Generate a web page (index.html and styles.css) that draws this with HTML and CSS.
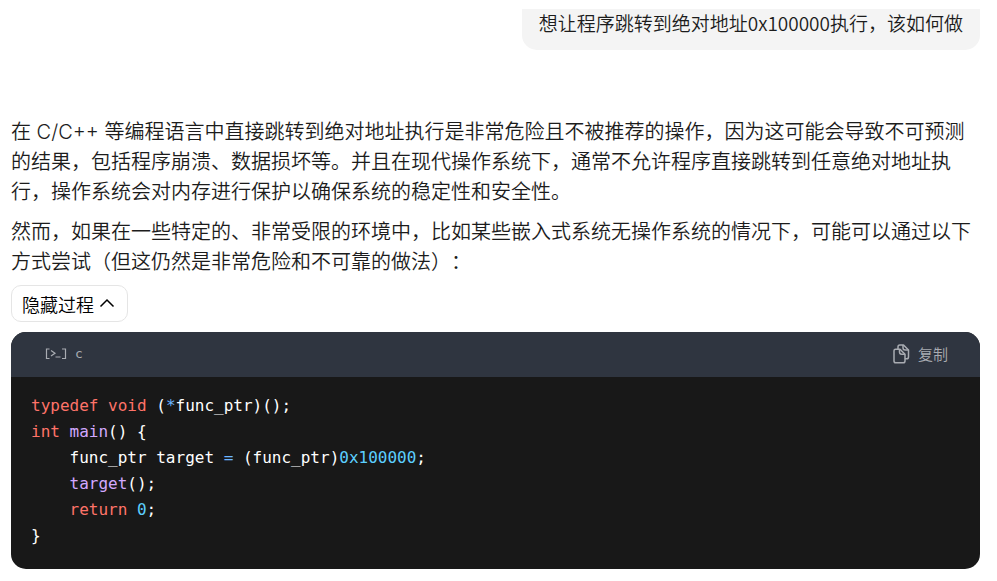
FILE: index.html
```html
<!DOCTYPE html>
<html lang="zh-CN">
<head>
    <meta charset="UTF-8">
    <meta name="viewport" content="width=device-width, initial-scale=1.0">
    <title>对话</title>
    <link rel="stylesheet" href="styles.css">
</head>
<body>
    <main class="chat">
        <div class="question">想让程序跳转到绝对地址0x100000执行，该如何做</div>
        <div class="answer">
            <p>在 C/C++ 等编程语言中直接跳转到绝对地址执行是非常危险且不被推荐的操作，因为这可能会导致不可预测的结果，包括程序崩溃、数据损坏等。并且在现代操作系统下，通常不允许程序直接跳转到任意绝对地址执行，操作系统会对内存进行保护以确保系统的稳定性和安全性。</p>
            <p>然而，如果在一些特定的、非常受限的环境中，比如某些嵌入式系统无操作系统的情况下，可能可以通过以下方式尝试（但这仍然是非常危险和不可靠的做法）：</p>
            <button type="button" class="toggle">
                隐藏过程
                <svg width="16" height="16" viewBox="0 0 16 16" fill="none" stroke="currentColor" stroke-width="1.5" aria-hidden="true">
                    <path d="M1.5 10.5 L8 4 L14.5 10.5"/>
                </svg>
            </button>
            <div class="code">
                <div class="code-header">
                    <span class="lang">
                        <svg width="22" height="12" viewBox="0 0 22 12" fill="none" stroke="currentColor" stroke-width="1.2" aria-hidden="true">
                            <path d="M4.5 1 H1.5 V10.5 H4.5"/>
                            <path d="M6 2.5 L10 5.2 L6 8"/>
                            <path d="M10.5 9 H15.5"/>
                            <path d="M17 1 H20.5 V10.5 H17"/>
                        </svg>
                        c
                    </span>
                    <button type="button" class="copy">
                        <svg width="17" height="20" viewBox="0 0 17 20" fill="none" stroke="currentColor" stroke-width="1.5" stroke-linejoin="round" aria-hidden="true">
                            <path d="M5 5 V2.8 Q5 1 6.8 1 H10.5 L15.5 6 V13 Q15.5 14.8 13.7 14.8 H12"/>
                            <path d="M10 1 V3.7 Q10 6 12.3 6 H15.5"/>
                            <path d="M2.6 5.2 H7 L12 10.2 V17 Q12 18.8 10.2 18.8 H2.8 Q1 18.8 1 17 V6.8 Q1 5.2 2.6 5.2 Z"/>
                            <path d="M6.5 5.2 V8 Q6.5 10.2 8.7 10.2 H12"/>
                        </svg>
                        复制
                    </button>
                </div>
<pre><code><span class="line"><span class="keyword">typedef</span> <span class="keyword">void</span> (<span class="operator">*</span>func_ptr)();</span><span class="line"><span class="keyword">int</span> <span class="function">main</span>() {</span><span class="line">    func_ptr target <span class="operator">=</span> (func_ptr)<span class="number">0x100000</span>;</span><span class="line">    <span class="function">target</span>();</span><span class="line">    <span class="keyword">return</span> <span class="number">0</span>;</span><span class="line">}</span></code></pre>
            </div>
        </div>
    </main>
</body>
</html>
```

FILE: styles.css
```css
* {
    box-sizing: border-box;
}

body {
    margin: 0;
    background-color: #fff;
    color: #1c1c1c;
    font-family: "Noto Sans CJK SC", sans-serif;
    font-weight: 350;
    text-spacing-trim: space-all;
}

.chat {
    display: flex;
    flex-direction: column;
    padding: 9px 17px 12px 11px;
}

.question {
    align-self: flex-end;
    padding: 0 17px 14px 17px;
    background-color: #f4f4f4;
    border-radius: 0 0 15px 15px;
    font-size: 19px;
    line-height: 27px;
}

.answer {
    margin-top: 67px;
}

.answer p {
    margin: 0 0 10px;
    font-family: Inter, "Noto Sans CJK SC", sans-serif;
    font-size: 20px;
    line-height: 30px;
}

.answer p + p {
    margin-bottom: 8px;
}

button {
    font-family: inherit;
    font-weight: inherit;
    cursor: pointer;
}

.toggle {
    display: flex;
    align-items: center;
    gap: 5px;
    height: 37px;
    padding: 0 12px 0 10px;
    border: 1px solid #e5e5e5;
    border-radius: 10px;
    background-color: #fff;
    color: #000;
    font-size: 18px;
}

.code {
    margin-top: 10px;
    border-radius: 15px;
    overflow: hidden;
    background-color: #181818;
    color: #fff;
}

.code-header {
    display: flex;
    justify-content: space-between;
    align-items: center;
    height: 45px;
    padding: 0 32px 2px 34px;
    background-color: #2f3540;
    color: #a9acb2;
}

.lang {
    display: flex;
    align-items: center;
    gap: 8px;
    font-family: "DejaVu Sans Mono", monospace;
    font-size: 13px;
}

.copy {
    display: flex;
    align-items: center;
    gap: 8px;
    padding: 0;
    border: none;
    background: none;
    color: inherit;
    font-size: 15px;
}

pre {
    margin: 0;
    padding: 16px 20px 20px;
    overflow-x: auto;
}

code {
    display: block;
    font-family: "DejaVu Sans Mono", monospace;
    font-size: 16px;
    font-weight: 400;
    line-height: 26px;
}

.line {
    display: block;
}

.keyword {
    color: #ff7369;
}

.operator {
    color: #6cb6ff;
}

.function {
    color: #d2a8ff;
}

.number {
    color: #5ccfff;
}
```
